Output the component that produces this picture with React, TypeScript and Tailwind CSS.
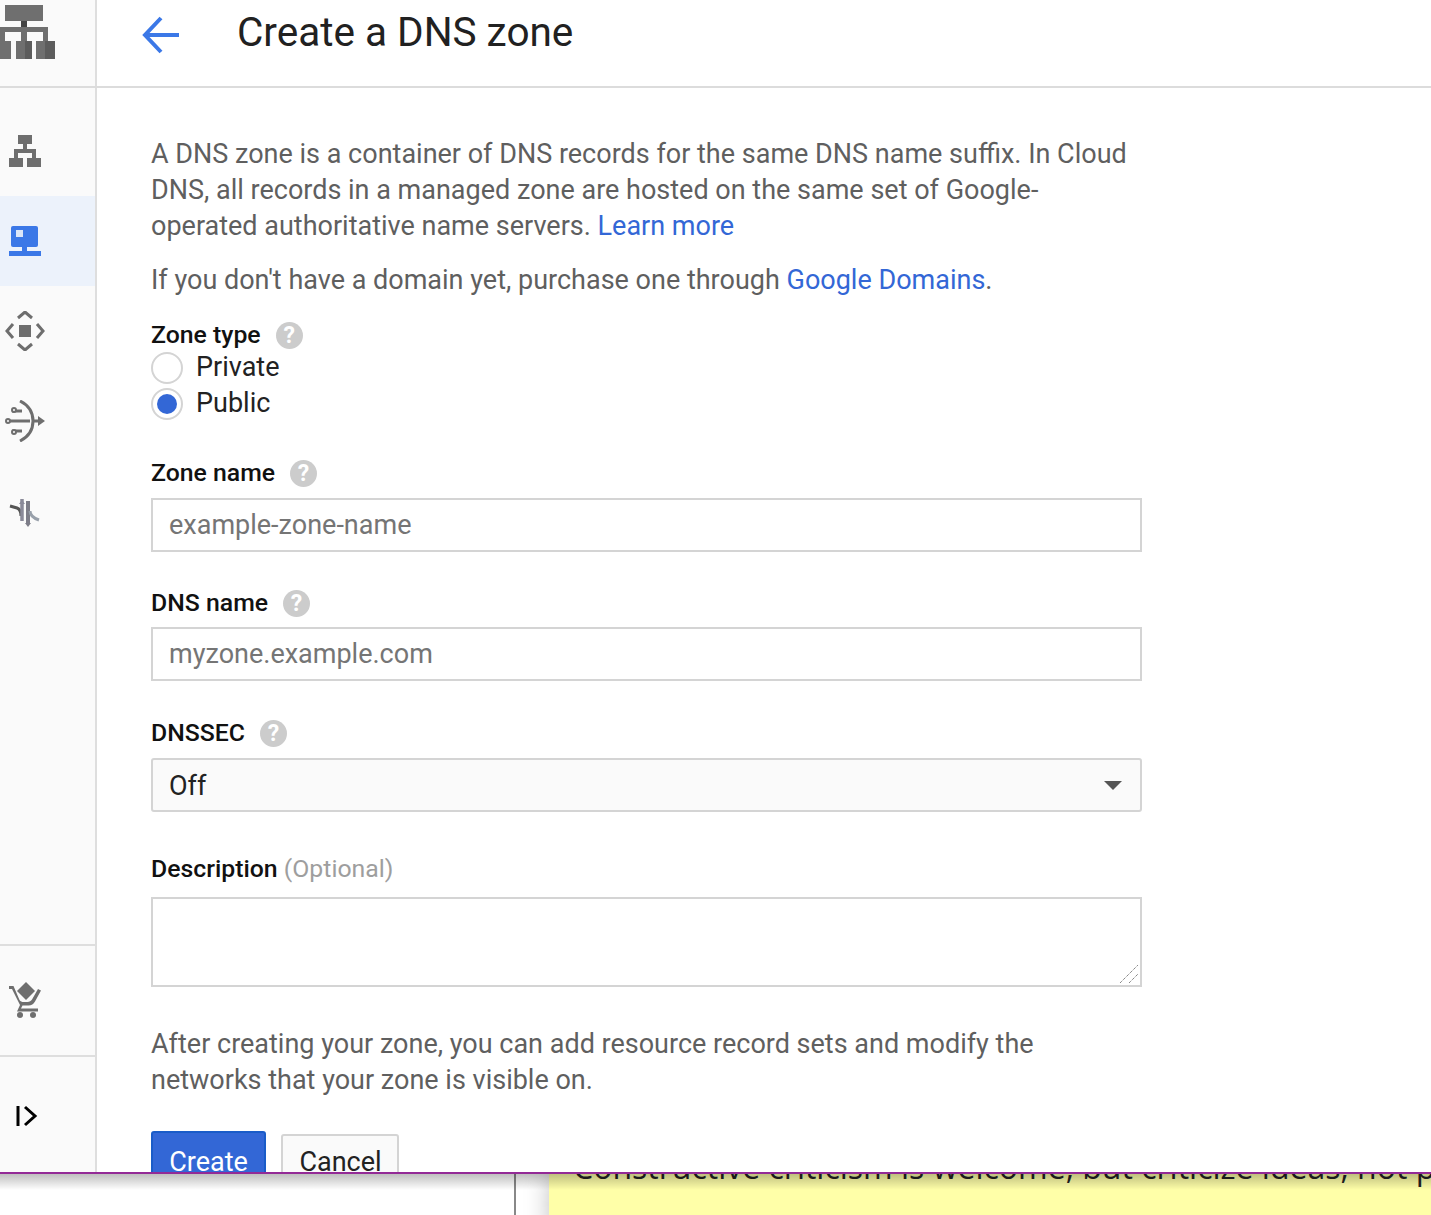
const label = "text-[24.8px] leading-[30px] font-medium text-[#111]";

function Help() {
  return (
    <span className="ml-[15px] flex size-[27px] items-center justify-center rounded-full bg-[#ccc] text-[23px] leading-none font-bold text-white">
      ?
    </span>
  );
}

function NavRow({ active, children }: { active?: boolean; children: React.ReactNode }) {
  return (
    <div className={`flex h-[90px] w-[95px] items-center pl-[9px] ${active ? "bg-[#ecf2fb]" : ""}`}>
      {children}
    </div>
  );
}

function Logo() {
  return (
    <svg width="56" height="60" viewBox="0 0 56 60" fill="#6f6f6f">
      <rect x="5" y="5" width="38" height="16" />
      <rect x="21" y="21" width="6" height="7" fill="#444" />
      <path d="M0 27h48v14h-5v-9H27v9h-6v-9H5v9H0z" />
      <rect x="0" y="41" width="11" height="18" />
      <rect x="16" y="41" width="16" height="18" />
      <rect x="36" y="41" width="19" height="18" />
      <rect x="25" y="41" width="7" height="18" fill="#5c5c5c" />
      <rect x="45" y="41" width="10" height="18" fill="#5c5c5c" />
    </svg>
  );
}

function Sidebar() {
  return (
    <aside className="flex w-[97px] shrink-0 flex-col border-r-2 border-[#dedede] bg-[#fafafa] pt-[18px]">
      <NavRow>
        <svg width="32" height="36" viewBox="0 0 32 36" fill="#6e6e6e" className="mt-[4px]">
          <rect x="9" y="0" width="14" height="9" />
          <rect x="14" y="9" width="4" height="5" />
          <path d="M5 14h22v9h-4v-5H9v5H5z" />
          <rect x="0" y="23" width="14" height="9" />
          <rect x="18" y="23" width="14" height="9" />
        </svg>
      </NavRow>
      <NavRow active>
        <svg width="32" height="32" viewBox="0 0 32 32" className="mt-[2px]">
          <rect x="2" y="0" width="27" height="21" rx="2" fill="#3b78e7" />
          <rect x="7" y="4" width="7" height="7" fill="#dbe6f8" />
          <rect x="13" y="21" width="5" height="5" fill="#3b78e7" />
          <rect x="0" y="25" width="32" height="5" fill="#3b78e7" />
        </svg>
      </NavRow>
      <NavRow>
        <svg width="40" height="40" viewBox="0 0 40 40" className="ml-[-4px]" fill="none" stroke="#6e6e6e" strokeWidth="3">
          <rect x="14" y="14" width="12" height="12" fill="#6e6e6e" stroke="none" />
          <path d="M13 7l7-6 7 6M13 33l7 6 7-6M8 13l-6 7 6 7M32 13l6 7-6 7" />
        </svg>
      </NavRow>
      <NavRow>
        <svg width="40" height="42" viewBox="0 0 40 42" className="ml-[-4px]" fill="none" stroke="#6e6e6e" strokeWidth="3">
          <path d="M15 1c10 5 13 12 13 20s-3 15-13 20" />
          <path d="M5 21h20M7 11h10M7 31h10M27 21h8" />
          <circle cx="3" cy="21" r="2" strokeWidth="2" fill="#fafafa" />
          <circle cx="9" cy="10" r="2" strokeWidth="2" fill="#fafafa" />
          <circle cx="9" cy="32" r="2" strokeWidth="2" fill="#fafafa" />
          <path d="M33 16l7 5-7 5z" fill="#6e6e6e" stroke="none" />
        </svg>
      </NavRow>
      <NavRow>
        <svg width="32" height="32" viewBox="0 0 32 32" fill="none">
          <path d="M1 11l7 2c3 1 4 4 4 8" stroke="#555" strokeWidth="3" />
          <path d="M13 26V4" stroke="#8a8a99" strokeWidth="3.500" />
          <path d="M13 5l-3 4h6z" fill="#8a8a99" />
          <rect x="17" y="6" width="4" height="22" fill="#7d7d88" />
          <path d="M21 16c0 4 3 7 9 9" stroke="#98a0aa" strokeWidth="3" />
          <path d="M19 32l-3-4h6z" fill="#7d7d88" />
        </svg>
      </NavRow>
      <div className="mt-[388px] flex h-[111px] items-center border-t-2 border-[#dedede] pl-[9px]">
        <svg width="32" height="36" viewBox="0 0 32 36" fill="#6e6e6e" className="mt-[-1px]">
          <path d="M17 0l9 9-9 9-9-9z" />
          <path d="M0 4h4.500l6 14c1 1.600 2.500 2 4 2h4c2 0 3.500-1 4.500-2.500L29 7l3 1.500-6 11c-1.500 2.500-3.500 4-6.500 4h-6l-1.500 3H29v3H8l3-6.500L3 7H0z" />
          <circle cx="11" cy="33" r="3" />
          <circle cx="24" cy="33" r="3" />
        </svg>
      </div>
      <div className="flex flex-1 items-start border-t-2 border-[#dedede] pt-[48px] pl-[16px]">
        <svg width="22" height="22" viewBox="0 0 22 22" fill="none" stroke="#000" strokeWidth="3">
          <path d="M2 1v20M9 2l10 9-10 9" />
        </svg>
      </div>
    </aside>
  );
}

function Field({ placeholder }: { placeholder: string }) {
  return (
    <div className="flex h-[54px] items-center border-2 border-[#d4d4d4] bg-white pb-[1px] pl-4 text-[27px] text-[#757575]">
      {placeholder}
    </div>
  );
}

function Form() {
  return (
    <main className="flex-1 pt-[48px] pl-[54px]">
      <div className="w-[991px] text-[27px] leading-[36px] text-[#5f5f5f]">
        <p>
          A DNS zone is a container of DNS records for the same DNS name suffix. In Cloud
          <br />
          DNS, all records in a managed zone are hosted on the same set of Google-
          <br />
          operated authoritative name servers. <span className="text-[#3367d6]">Learn more</span>
        </p>
        <p className="mt-[18px]">
          If you don't have a domain yet, purchase one through{" "}
          <span className="text-[#3367d6]">Google Domains</span>.
        </p>

        <div className="mt-[22px] flex h-[30px] items-center">
          <span className={label}>Zone type</span>
          <Help />
        </div>
        <div className="flex h-[36px] items-center text-[#222]">
          <span className="mr-[13px] size-[32px] rounded-full border-2 border-[#d4d4d4] bg-white" />
          <span className="mt-[-2px]">Private</span>
        </div>
        <div className="flex h-[36px] items-center text-[#222]">
          <span className="mr-[13px] flex size-[32px] items-center justify-center rounded-full border-2 border-[#d4d4d4] bg-white">
            <span className="size-[20px] rounded-full bg-[#3367d6]" />
          </span>
          <span className="mt-[-2px]">Public</span>
        </div>

        <div className="mt-[36px] mb-[10px] flex h-[30px] items-center">
          <span className={label}>Zone name</span>
          <Help />
        </div>
        <Field placeholder="example-zone-name" />

        <div className="mt-[36px] mb-[9px] flex h-[30px] items-center">
          <span className={label}>DNS name</span>
          <Help />
        </div>
        <Field placeholder="myzone.example.com" />

        <div className="mt-[37px] mb-[10px] flex h-[30px] items-center">
          <span className={label}>DNSSEC</span>
          <Help />
        </div>
        <div className="flex h-[54px] items-center justify-between rounded-[3px] border-2 border-[#d4d4d4] bg-[#fafafa] pr-[18px] pl-4 text-[#222]">
          <span className="mt-[1px]">Off</span>
          <span className="h-0 w-0 border-x-[9px] border-t-[9px] border-x-transparent border-t-[#555]" />
        </div>

        <div className="mt-[42px] mb-[13px] h-[30px] text-[24.8px] leading-[30px]">
          <span className="font-medium text-[#111]">Description</span>{" "}
          <span className="text-[#9e9e9e]">(Optional)</span>
        </div>
        <div className="relative h-[90px] border-2 border-[#d4d4d4] bg-white">
          <svg width="20" height="20" viewBox="0 0 20 20" stroke="#555" strokeDasharray="1 1" className="absolute right-[1px] bottom-[1px]">
            <path d="M1 19L19 1M10 19l9-9" />
          </svg>
        </div>

        <p className="mt-[39px]">
          After creating your zone, you can add resource record sets and modify the
          <br />
          networks that your zone is visible on.
        </p>

        <div className="mt-[33px] flex items-start gap-[15px]">
          <div className="flex h-[60px] w-[115px] justify-center rounded-[3px] border-2 border-[#1a5cc8] bg-[#3367d6] pt-[11px] text-white">
            Create
          </div>
          <div className="mt-[3px] flex h-[60px] w-[118px] justify-center rounded-[3px] border-2 border-[#d4d4d4] bg-[#fafafa] pt-[8px] pl-[1px] text-[#222]">
            Cancel
          </div>
        </div>
      </div>
    </main>
  );
}

export default function App() {
  return (
    <div className="flex h-[1215px] w-[1431px] flex-col overflow-hidden bg-white font-['Roboto',sans-serif]">
      <div className="relative z-10 h-[1174px] shrink-0 overflow-hidden border-b-2 border-[#932a96] bg-white">
        <header className="flex h-[88px] border-b-2 border-[#dcdcdc]">
          <div className="w-[97px] shrink-0 border-r-2 border-[#dedede] bg-[#fafafa]">
            <Logo />
          </div>
          <svg width="40" height="40" viewBox="0 0 40 40" fill="none" stroke="#3b78e7" strokeWidth="4" className="mt-[15px] ml-[44px]">
            <path d="M3 20h35M20 3L4 20l16 17" />
          </svg>
          <h1 className="mt-[8px] ml-[56px] text-[40.5px] leading-[48px] text-[#212121]">Create a DNS zone</h1>
        </header>
        <div className="flex h-[1084px]">
          <Sidebar />
          <Form />
        </div>
      </div>
      <div className="relative flex flex-1">
        <div className="w-[516px] border-r-2 border-[#888]" />
        <div className="w-[33px]" />
        <div className="h-[60px] flex-1 overflow-hidden bg-[#ffffa8] pl-[24px] shadow-[0_0_24px_rgba(0,0,0,0.25)]">
          <p className="mt-[-29px] font-['Open_Sans',sans-serif] text-[32px] leading-[44px] whitespace-nowrap text-[#222]">
            Constructive criticism is welcome, but criticize ideas, not people.
          </p>
        </div>
        <div className="pointer-events-none absolute inset-x-0 top-0 h-[16px] bg-gradient-to-b from-black/25 to-transparent" />
      </div>
    </div>
  );
}
